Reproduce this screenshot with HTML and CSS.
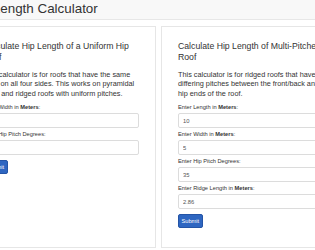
FILE: index.html
```html
<!DOCTYPE html>
<html lang="en">
<head>
    <meta charset="UTF-8">
    <meta name="viewport" content="width=device-width, initial-scale=1.0">
    <title>Hip Length Calculator</title>
    <link rel="stylesheet" href="styles.css">
</head>
<body>
    <header class="topbar">
        <div class="wrap">
            <h1 class="page-title">Hip Length Calculator</h1>
        </div>
    </header>

    <main class="wrap calculators">
        <section class="calc-card">
            <h2>Calculate Hip Length of a Uniform Hip Roof</h2>
            <p>This calculator is for roofs that have the same pitch on all four sides. This works on pyramidal roofs and ridged roofs with uniform pitches.</p>
            <form id="uniform-form">
                <div class="form-group">
                    <label for="u_width">Enter Width in <b>Meters</b>:</label>
                    <input type="number" step="0.01" id="u_width" name="width">
                </div>
                <div class="form-group">
                    <label for="u_pitch">Enter Hip Pitch Degrees:</label>
                    <input type="number" step="0.01" id="u_pitch" name="pitch">
                </div>
                <button type="submit" class="btn-submit">Submit</button>
            </form>
        </section>

        <section class="calc-card">
            <h2>Calculate Hip Length of Multi-Pitched Roof</h2>
            <p>This calculator is for ridged roofs that have differing pitches between the front/back and hip ends of the roof.</p>
            <form id="multi-form">
                <div class="form-group">
                    <label for="m_length">Enter Length in <b>Meters</b>:</label>
                    <input type="number" step="0.01" id="m_length" name="length" value="10">
                </div>
                <div class="form-group">
                    <label for="m_width">Enter Width in <b>Meters</b>:</label>
                    <input type="number" step="0.01" id="m_width" name="width" value="5">
                </div>
                <div class="form-group">
                    <label for="m_pitch">Enter Hip Pitch Degrees:</label>
                    <input type="number" step="0.01" id="m_pitch" name="pitch" value="35">
                </div>
                <div class="form-group">
                    <label for="m_ridge">Enter Ridge Length in <b>Meters</b>:</label>
                    <input type="number" step="0.01" id="m_ridge" name="ridge" value="2.86">
                </div>
                <button type="submit" class="btn-submit">Submit</button>
            </form>
        </section>
    </main>
</body>
</html>
```

FILE: styles.css
```css
/* Reset default margin and padding */
* {
    margin: 0;
    padding: 0;
    box-sizing: border-box;
}

body {
    font-family: 'Liberation Sans', Arial, sans-serif;
    background-color: #ffffff;
    color: #333;
    overflow: hidden;
}

.wrap {
    margin-left: -34px;
}

/* Top bar */
.topbar {
    height: 20px;
    background-color: #f8f8f8;
    border-bottom: 1px solid #e7e7e7;
}

.page-title {
    padding-left: 3px;
    font-size: 13.4px;
    font-weight: normal;
    line-height: 17px;
    color: #333;
}

/* Two calculators side by side */
.calculators {
    display: flex;
    gap: 5px;
    padding-top: 6px;
}

.calc-card {
    width: 190px;
    flex-shrink: 0;
    padding: 14px 16px 19px;
    background: #ffffff;
    border: 1px solid #e6e6e6;
}

.calc-card h2 {
    font-size: 8.7px;
    font-weight: normal;
    line-height: 10.5px;
    margin-bottom: 8px;
}

.calc-card p {
    font-size: 7.3px;
    line-height: 9.4px;
    padding-right: 4px;
    margin-bottom: 6px;
}

/* Form input styling */
.form-group {
    margin-bottom: 3px;
}

.form-group label {
    display: block;
    font-size: 5.7px;
    line-height: 7px;
    margin-bottom: 2px;
}

.form-group input {
    display: block;
    width: 100%;
    height: 15px;
    padding: 0 4px;
    border: 1px solid #dcdcdc;
    border-radius: 2px;
    font-family: inherit;
    font-size: 5.8px;
    color: #555;
    -moz-appearance: textfield;
}

.form-group input::-webkit-inner-spin-button,
.form-group input::-webkit-outer-spin-button {
    -webkit-appearance: none;
}

/* Submit button */
.btn-submit {
    display: block;
    margin-top: 5px;
    height: 13.5px;
    padding: 0 2.5px;
    font-family: inherit;
    font-size: 5.7px;
    color: #fff;
    background-color: #2e66c1;
    border: 1px solid #2454a6;
    border-radius: 2px;
    cursor: pointer;
}
```
